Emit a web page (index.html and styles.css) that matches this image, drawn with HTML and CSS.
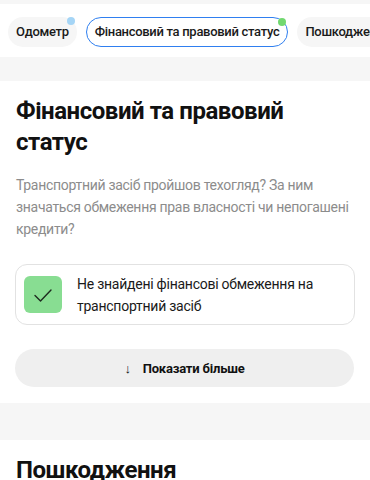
FILE: index.html
```html
<!DOCTYPE html>
<html lang="uk">
<head>
<meta charset="utf-8">
<link rel="stylesheet" href="styles.css">
</head>
<body>
<header class="tabs-bar">
  <nav class="tabs">
    <div class="tab">Одометр<span class="dot dot-blue"></span></div>
    <div class="tab tab-active">Фінансовий та правовий статус<span class="dot dot-green"></span></div>
    <div class="tab">Пошкодження</div>
  </nav>
</header>
<section class="section">
  <h2 class="title">Фінансовий та правовий статус</h2>
  <p class="desc">Транспортний засіб пройшов техогляд? За ним значаться обмеження прав власності чи непогашені кредити?</p>
  <div class="card">
    <div class="check">
      <svg width="20" height="20" viewBox="0 0 20 20"><path d="M2 10.5 L7.5 16 L18 5" fill="none" stroke="#1e2a1f" stroke-width="1.4" stroke-linecap="round" stroke-linejoin="round"/></svg>
    </div>
    <div class="card-text">Не знайдені фінансові обмеження на транспортний засіб</div>
  </div>
  <button class="more"><span class="arrow">↓</span>Показати більше</button>
</section>
<section class="section section-2">
  <h2 class="title">Пошкодження</h2>
</section>
</body>
</html>
```
FILE: styles.css
```css
* { box-sizing: border-box; }
html, body { margin: 0; padding: 0; }
body {
  background: #f6f6f6;
  font-family: Roboto, "Noto Sans", sans-serif;
  color: #111;
  padding-top: 4px;
  overflow: hidden;
}
.tabs-bar {
  background: #fff;
  height: 53px;
  padding: 13px 0 0 8px;
  overflow: hidden;
}
.tabs {
  display: flex;
  gap: 9px;
  white-space: nowrap;
}
.tab {
  position: relative;
  flex: none;
  height: 30px;
  padding: 0 8px;
  border-radius: 15px;
  background: #f6f6f6;
  font-size: 13px;
  font-weight: 500;
  line-height: 30px;
  letter-spacing: -0.3px;
  color: #1a1a1a;
}
.tab-active {
  background: #fff;
  border: 1.5px solid #2f7ff0;
  line-height: 27px;
}
.dot {
  position: absolute;
  width: 8px;
  height: 8px;
  border-radius: 50%;
}
.dot-blue { background: #a5d5f6; top: 0px; right: 2px; }
.dot-green { background: #72d870; top: 0px; right: 1px; }
.section {
  background: #fff;
  margin-top: 24px;
  padding: 15px 16px 16px 16px;
}
.title {
  margin: 0;
  font-size: 24px;
  line-height: 31px;
  font-weight: 700;
  letter-spacing: -0.45px;
  color: #111;
}
.desc {
  margin: 16px 0 0 0;
  font-size: 14px;
  line-height: 22px;
  letter-spacing: -0.3px;
  color: #8c8c8c;
}
.card {
  margin-top: 24px;
  margin-right: -1px;
  margin-left: -1px;
  display: flex;
  align-items: center;
  gap: 15px;
  border: 1px solid #e2e2e2;
  border-radius: 12px;
  padding: 8px 8px;
  height: 61px;
}
.check {
  flex: none;
  width: 38px;
  height: 37px;
  border-radius: 6px;
  background: #88dd92;
  display: flex;
  align-items: center;
  justify-content: center;
}
.card-text {
  font-size: 14px;
  line-height: 22px;
  letter-spacing: -0.25px;
  color: #1a1a1a;
}
.more {
  display: flex;
  align-items: center;
  justify-content: center;
  gap: 12px;
  width: calc(100% + 1px);
  margin: 24px 0 0 -1px;
  height: 38px;
  border: none;
  border-radius: 19px;
  background: #efefef;
  font-family: Roboto, "Noto Sans", sans-serif;
  font-size: 13px;
  font-weight: 700;
  letter-spacing: -0.2px;
  color: #111;
}
.arrow { font-size: 13px; font-weight: 400; }
.section-2 {
  margin-top: 37px;
  padding-top: 15px;
  height: 60px;
}
```
